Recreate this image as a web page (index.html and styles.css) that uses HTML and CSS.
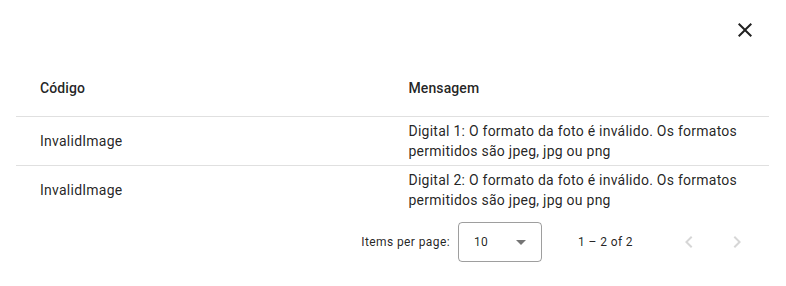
FILE: index.html
```html
<!DOCTYPE html>
<html lang="pt-BR">

<head>
  <meta charset="UTF-8">
  <meta name="viewport" content="width=device-width, initial-scale=1.0">
  <title>Erros de importação</title>
  <link rel="stylesheet" href="styles.css">
</head>

<body>
  <div class="dialog">
    <div class="dialog-header">
      <button class="icon-btn close-btn" aria-label="Fechar">
        <svg viewBox="0 0 24 24" width="24" height="24">
          <path d="M19 6.41L17.59 5 12 10.59 6.41 5 5 6.41 10.59 12 5 17.59 6.41 19 12 13.41 17.59 19 19 17.59 13.41 12z" />
        </svg>
      </button>
    </div>

    <div class="table">
      <div class="row header-row">
        <div class="cell">Código</div>
        <div class="cell">Mensagem</div>
      </div>
      <div class="row">
        <div class="cell">InvalidImage</div>
        <div class="cell">Digital 1: O formato da foto é inválido. Os formatos permitidos são jpeg, jpg ou png</div>
      </div>
      <div class="row last">
        <div class="cell">InvalidImage</div>
        <div class="cell">Digital 2: O formato da foto é inválido. Os formatos permitidos são jpeg, jpg ou png</div>
      </div>
    </div>

    <div class="paginator">
      <span class="page-size-label">Items per page:</span>
      <div class="page-size-select">
        <span>10</span>
        <span class="arrow"></span>
      </div>
      <span class="range-label">1 – 2 of 2</span>
      <button class="icon-btn nav-btn" disabled aria-label="Página anterior">
        <svg viewBox="0 0 24 24" width="24" height="24">
          <path d="M15.41 7.41L14 6l-6 6 6 6 1.41-1.41L10.83 12z" />
        </svg>
      </button>
      <button class="icon-btn nav-btn" disabled aria-label="Próxima página">
        <svg viewBox="0 0 24 24" width="24" height="24">
          <path d="M10 6L8.59 7.41 13.17 12l-4.58 4.59L10 18l6-6z" />
        </svg>
      </button>
    </div>
  </div>
</body>

</html>
```

FILE: styles.css
```css
body {
  margin: 0;
  background: #fff;
  font-family: Roboto, "Liberation Sans", sans-serif;
  color: rgba(0, 0, 0, 0.87);
}

.dialog {
  padding: 0 17px 0 16px;
}

.dialog-header {
  display: flex;
  justify-content: flex-end;
  height: 60px;
  padding-top: 6px;
  box-sizing: border-box;
}

.icon-btn {
  border: 0;
  background: none;
  padding: 0;
  display: flex;
  align-items: center;
  justify-content: center;
  cursor: pointer;
}

.close-btn {
  width: 48px;
  height: 48px;
}

.close-btn svg {
  fill: rgba(0, 0, 0, 0.87);
}

/* table */
.row {
  display: grid;
  grid-template-columns: 1fr 1fr;
  align-items: center;
  min-height: 48px;
  border-bottom: 1px solid #e0e0e0;
  font-size: 14px;
  line-height: 20px;
  letter-spacing: 0.25px;
}

.row.last {
  border-bottom: 0;
}

.header-row {
  height: 56px;
  font-weight: 500;
  letter-spacing: 0.1px;
}

.cell {
  padding: 0 16px;
}

.cell:first-child {
  padding-left: 24px;
}

.cell:last-child {
  padding-right: 24px;
}

/* paginator */
.paginator {
  display: flex;
  align-items: center;
  justify-content: flex-end;
  height: 56px;
  padding: 0 8px;
  font-size: 12px;
  letter-spacing: 0.4px;
}

.page-size-label {
  margin: 0 4px;
}

.page-size-select {
  display: flex;
  align-items: center;
  justify-content: space-between;
  width: 84px;
  height: 40px;
  box-sizing: border-box;
  margin: 0 12px 0 4px;
  padding: 0 15px 0 15px;
  border: 1px solid rgba(0, 0, 0, 0.38);
  border-radius: 4px;
}

.arrow {
  width: 0;
  height: 0;
  border-left: 5px solid transparent;
  border-right: 5px solid transparent;
  border-top: 5px solid rgba(0, 0, 0, 0.54);
}

.range-label {
  margin: 0 32px 0 24px;
}

.nav-btn {
  width: 48px;
  height: 48px;
}

.nav-btn svg {
  fill: rgba(0, 0, 0, 0.16);
}
```
